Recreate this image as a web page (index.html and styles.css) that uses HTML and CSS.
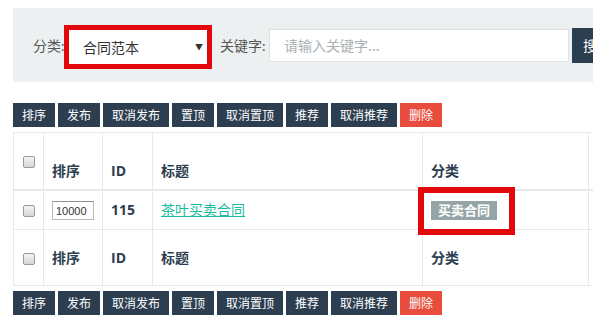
FILE: index.html
```html
<!DOCTYPE html>
<html lang="zh-CN">
<head>
    <meta charset="UTF-8">
    <meta name="viewport" content="width=device-width, initial-scale=1.0">
    <title>合同范本</title>
    <link rel="stylesheet" href="styles.css">
</head>
<body>
    <div class="page">

        <!-- Filter -->
        <form class="filter">
            <label class="filter-label">分类:</label>
            <div class="select-wrap">
                <select class="filter-select">
                    <option>合同范本</option>
                </select>
                <span class="select-arrow">▼</span>
            </div>
            <label class="filter-label kw">关键字:</label>
            <input type="text" class="filter-input" placeholder="请输入关键字...">
            <button type="submit" class="btn-search">搜索</button>
            <span class="mark mark-select"></span>
        </form>

        <!-- Top toolbar -->
        <div class="toolbar">
            <button class="btn">排序</button>
            <button class="btn">发布</button>
            <button class="btn">取消发布</button>
            <button class="btn">置顶</button>
            <button class="btn">取消置顶</button>
            <button class="btn">推荐</button>
            <button class="btn">取消推荐</button>
            <button class="btn btn-danger">删除</button>
        </div>

        <table class="list">
            <colgroup>
                <col class="c-check">
                <col class="c-sort">
                <col class="c-id">
                <col class="c-title">
                <col class="c-cat">
                <col class="c-op">
            </colgroup>
            <thead>
                <tr class="head-row">
                    <th><input type="checkbox" class="chk"></th>
                    <th>排序</th>
                    <th>ID</th>
                    <th>标题</th>
                    <th>分类</th>
                    <th></th>
                </tr>
            </thead>
            <tbody>
                <tr class="data-row">
                    <td><input type="checkbox" class="chk"></td>
                    <td><input type="text" class="sort-input" value="10000"></td>
                    <td><b>115</b></td>
                    <td><a href="#" class="title-link">茶叶买卖合同</a></td>
                    <td class="cat-cell">
                        <span class="tag">买卖合同</span>
                        <span class="mark mark-tag"></span>
                    </td>
                    <td></td>
                </tr>
            </tbody>
            <tfoot>
                <tr class="foot-row">
                    <th><input type="checkbox" class="chk"></th>
                    <th>排序</th>
                    <th>ID</th>
                    <th>标题</th>
                    <th>分类</th>
                    <th></th>
                </tr>
            </tfoot>
        </table>

        <!-- Bottom toolbar -->
        <div class="toolbar bottom">
            <button class="btn">排序</button>
            <button class="btn">发布</button>
            <button class="btn">取消发布</button>
            <button class="btn">置顶</button>
            <button class="btn">取消置顶</button>
            <button class="btn">推荐</button>
            <button class="btn">取消推荐</button>
            <button class="btn btn-danger">删除</button>
        </div>

    </div>
</body>
</html>
```

FILE: styles.css
```css
html, body {
    overflow: hidden;
}

body {
    margin: 0;
    padding: 8px 0 0 13px;
    font-family: Lato, "Open Sans", "Noto Sans CJK SC", sans-serif;
    font-size: 14px;
    color: #2c3e50;
    background: #fff;
}

.page {
    width: 700px;
}

/* Filter panel */
.filter {
    position: relative;
    display: flex;
    align-items: center;
    height: 74px;
    padding: 0 20px;
    background-color: #ecf0f1;
    box-sizing: border-box;
}

.filter-label {
    font-size: 14px;
    color: #555;
    width: 33px;
    white-space: nowrap;
}

.filter-label.kw {
    width: 45px;
    margin-left: 8px;
}

.select-wrap {
    position: relative;
    margin-top: 3px;
}

.filter-select {
    -webkit-appearance: none;
    appearance: none;
    width: 146px;
    height: 34px;
    padding: 0 0 0 17px;
    border: none;
    background: #fff;
    font-family: "Noto Sans CJK SC", sans-serif;
    font-size: 14px;
    color: #333;
}

.select-arrow {
    position: absolute;
    right: 9px;
    top: 11px;
    font-size: 8px;
    color: #333;
}

.filter-input {
    width: 300px;
    height: 33px;
    margin-left: 4px;
    padding: 0 14px;
    border: 1px solid #dde2e3;
    box-sizing: border-box;
    font-family: "Noto Sans CJK SC", sans-serif;
    font-size: 14px;
}

.filter-input::placeholder {
    color: #a9b0b4;
}

.btn-search {
    height: 35px;
    margin-left: 3px;
    padding: 0 11px;
    border: none;
    background-color: #2c3e50;
    color: #fff;
    font-family: "Noto Sans CJK SC", sans-serif;
    font-size: 14px;
    white-space: nowrap;
}

/* Red annotation boxes */
.mark {
    position: absolute;
    border: 5px solid #e3080b;
    box-sizing: border-box;
    pointer-events: none;
}

.mark-select {
    left: 51px;
    top: 17px;
    width: 148px;
    height: 44px;
}

.mark-tag {
    left: -5px;
    top: -4px;
    width: 97px;
    height: 48px;
    border-width: 6px;
}

/* Toolbars */
.toolbar {
    display: flex;
    gap: 3px;
    margin-top: 21px;
}

.toolbar.bottom {
    margin-top: 5px;
}

.btn {
    height: 24px;
    padding: 0 9px;
    border: none;
    border-radius: 0;
    background-color: #2c3e50;
    color: #fff;
    font-family: "Noto Sans CJK SC", sans-serif;
    font-size: 12px;
    line-height: 24px;
    cursor: pointer;
}

.btn-danger {
    background-color: #e74c3c;
}

/* Table */
.list {
    margin-top: 5px;
    border-collapse: collapse;
    table-layout: fixed;
    width: 695px;
}

.c-check { width: 30px; }
.c-sort { width: 59px; }
.c-id { width: 50px; }
.c-title { width: 270px; }
.c-cat { width: 166px; }
.c-op { width: 120px; }

.list th,
.list td {
    padding: 8px;
    border: 1px solid #e6e9ea;
    text-align: left;
    line-height: 20px;
    font-family: "Open Sans", "Noto Sans CJK SC", sans-serif;
    font-size: 14px;
}

.list th {
    font-weight: bold;
    color: #2c3e50;
}

.list th:first-child,
.list td:first-child {
    padding: 8px 0 0 8px;
}

.head-row {
    height: 57px;
}

.head-row th {
    vertical-align: bottom;
    border-bottom-width: 2px;
}

.head-row th:first-child {
    vertical-align: middle;
}

.data-row {
    height: 40px;
}

.data-row td {
    vertical-align: middle;
}

.foot-row {
    height: 56px;
}

.foot-row th {
    vertical-align: middle;
}

.chk {
    -webkit-appearance: none;
    appearance: none;
    display: block;
    width: 12px;
    height: 12px;
    margin: -6px 0 0 1px;
    border: 1px solid #9a9a9a;
    border-radius: 2px;
    background: linear-gradient(#f4f4f4, #d6d6d6);
    box-sizing: border-box;
}

.sort-input {
    width: 42px;
    height: 19px;
    padding: 0 3px;
    border: 1px solid #b9b9b9;
    border-top-color: #8f8f8f;
    box-sizing: border-box;
    font-family: "Liberation Sans", Arial, sans-serif;
    font-size: 11px;
    color: #333;
}

.title-link {
    color: #18bc9c;
    text-decoration: underline;
    font-family: "Noto Sans CJK SC", sans-serif;
}

.cat-cell {
    position: relative;
}

.tag {
    display: inline-block;
    padding: 1px 7px 2px;
    background-color: #95a5a6;
    color: #fff;
    font-family: "Noto Sans CJK SC", sans-serif;
    font-size: 13px;
    font-weight: bold;
    line-height: 16px;
}
```
